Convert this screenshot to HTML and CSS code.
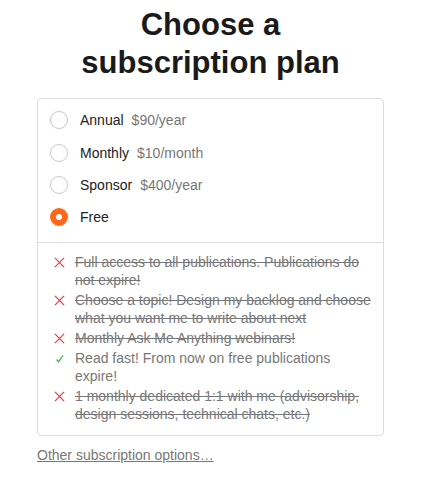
FILE: index.html
```html
<!DOCTYPE html>
<html>
<head>
<meta charset="utf-8">
<link rel="stylesheet" href="styles.css">
</head>
<body>
<div class="wrap">
  <h1 class="title">Choose a<br>subscription plan</h1>
  <div class="card">
    <div class="plans">
      <label class="plan"><span class="radio"></span><span class="name">Annual</span><span class="price">$90/year</span></label>
      <label class="plan"><span class="radio"></span><span class="name">Monthly</span><span class="price">$10/month</span></label>
      <label class="plan"><span class="radio"></span><span class="name">Sponsor</span><span class="price">$400/year</span></label>
      <label class="plan"><span class="radio checked"></span><span class="name">Free</span></label>
    </div>
    <ul class="features">
      <li class="feature off"><svg class="icon" viewBox="0 0 12 12"><path d="M1 1L11 11M11 1L1 11" stroke="#e8414b" stroke-width="1.4" fill="none"/></svg><span class="text">Full access to all publications. Publications do not expire!</span></li>
      <li class="feature off"><svg class="icon" viewBox="0 0 12 12"><path d="M1 1L11 11M11 1L1 11" stroke="#e8414b" stroke-width="1.4" fill="none"/></svg><span class="text">Choose a topic! Design my backlog and choose what you want me to write about next</span></li>
      <li class="feature off"><svg class="icon" viewBox="0 0 12 12"><path d="M1 1L11 11M11 1L1 11" stroke="#e8414b" stroke-width="1.4" fill="none"/></svg><span class="text">Monthly Ask Me Anything webinars!</span></li>
      <li class="feature on"><svg class="icon" viewBox="0 0 12 12"><path d="M3 7.5L5 9.5L9.5 3" stroke="#3cb54a" stroke-width="1.4" fill="none" stroke-linecap="round"/></svg><span class="text">Read fast! From now on free publications expire!</span></li>
      <li class="feature off"><svg class="icon" viewBox="0 0 12 12"><path d="M1 1L11 11M11 1L1 11" stroke="#e8414b" stroke-width="1.4" fill="none"/></svg><span class="text">1 monthly dedicated 1:1 with me (advisorship, design sessions, technical chats, etc.)</span></li>
    </ul>
  </div>
  <a class="other" href="#">Other subscription options…</a>
</div>
</body>
</html>
```
FILE: styles.css
```css
* { box-sizing: border-box; }
body {
  margin: 0;
  background: #fff;
  font-family: "Liberation Sans", Arial, sans-serif;
  color: #222;
}
.wrap {
  width: 347px;
  margin-left: 37px;
  padding-top: 6px;
}
.title {
  margin: 0 0 16px;
  text-align: center;
  font-size: 31px;
  line-height: 38px;
  font-weight: 700;
  color: #1a1a1a;
}
.card {
  border: 1px solid #ddd;
  border-radius: 4px;
}
.plans {
  padding: 5px 12px 8px;
  border-bottom: 1px solid #ddd;
}
.plan {
  display: flex;
  align-items: center;
  height: 32.4px;
  font-size: 14px;
}
.radio {
  width: 18px;
  height: 18px;
  border: 1px solid #c8c8c8;
  border-radius: 50%;
  margin-right: 12px;
  flex: none;
}
.radio.checked {
  border: 6px solid #ff6719;
  background: #fff;
}
.name { color: #222; }
.price { color: #777; margin-left: 8px; font-size: 14px; }
.features {
  list-style: none;
  margin: 0;
  padding: 10px 12px 12px 16px;
  display: flex;
  flex-direction: column;
  gap: 2px;
}
.feature {
  display: flex;
  align-items: flex-start;
  font-size: 14px;
  line-height: 18px;
  color: #777;
}
.icon {
  width: 11px;
  height: 11px;
  flex: none;
  margin-top: 4px;
  margin-right: 10px;
}
.off .text { text-decoration: line-through; }
.other {
  display: inline-block;
  margin-top: 11px;
  font-size: 14px;
  color: #777;
  text-decoration: underline;
}
```
